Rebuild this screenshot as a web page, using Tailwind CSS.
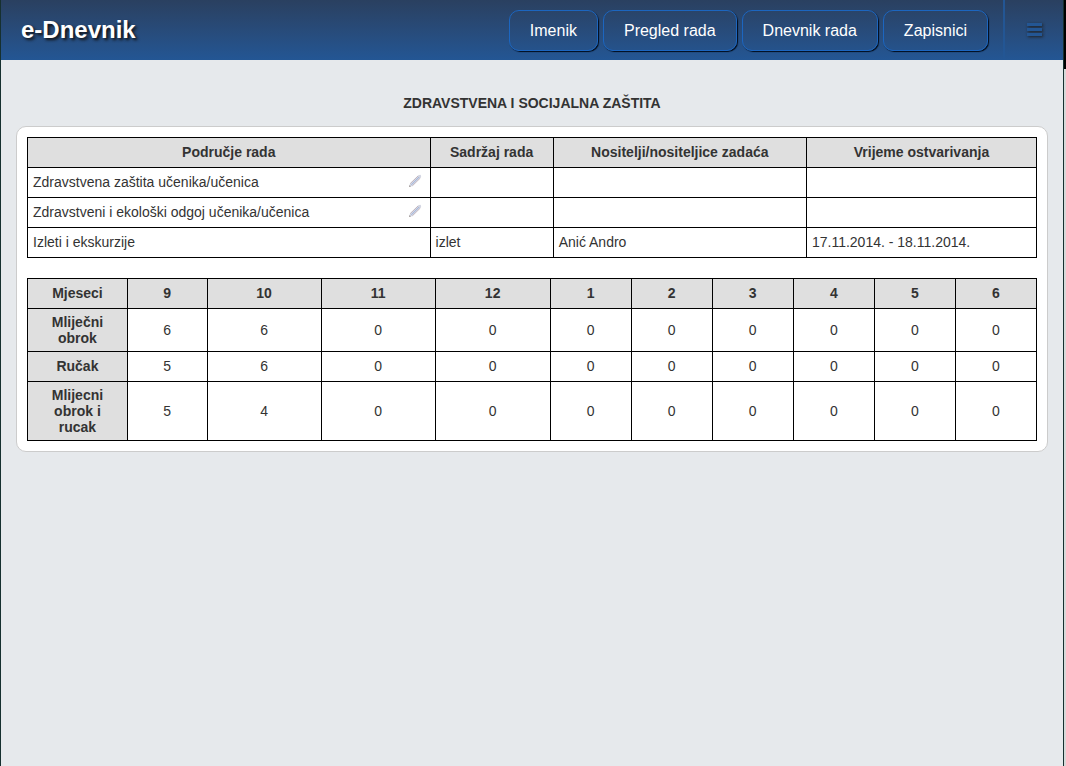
<!DOCTYPE html>
<html lang="hr">
<head>
<meta charset="utf-8">
<meta name="viewport" content="width=device-width, initial-scale=1">
<title>e-Dnevnik</title>
<script src="https://cdn.jsdelivr.net/npm/@tailwindcss/browser@4"></script>
</head>
<body class="flex min-h-screen bg-[#e6e9ec] font-['Liberation_Sans',Arial,sans-serif] text-[#333]">
<div class="min-w-0 flex-1 border-x border-[#16302f]">
  <header class="flex h-[60px] items-center bg-linear-to-b from-[#2a4060] to-[#235694]">
    <a href="#" class="pl-5 text-2xl font-bold text-white [text-shadow:2px_2px_3px_#111]">e-Dnevnik</a>
    <nav class="ml-auto flex gap-[5px] pr-[15px] text-base text-white">
      <a href="#" class="flex h-[41px] items-center rounded-[10px] border border-[#1c66c0] px-5 pt-0.5 shadow-[1px_1px_1px_#000c1c]">Imenik</a>
      <a href="#" class="flex h-[41px] items-center rounded-[10px] border border-[#1c66c0] px-5 pt-0.5 shadow-[1px_1px_1px_#000c1c]">Pregled rada</a>
      <a href="#" class="flex h-[41px] items-center rounded-[10px] border border-[#1c66c0] px-5 pt-0.5 shadow-[1px_1px_1px_#000c1c]">Dnevnik rada</a>
      <a href="#" class="flex h-[41px] items-center rounded-[10px] border border-[#1c66c0] px-5 pt-0.5 shadow-[1px_1px_1px_#000c1c]">Zapisnici</a>
    </nav>
    <button type="button" aria-label="Izbornik" class="flex h-full w-[60px] items-center border-l-2 border-[#235694] pb-0.5 pl-[22px]">
      <span class="flex flex-col gap-0.5">
        <span class="h-[3px] w-[15px] bg-[#235694] shadow-[1px_1px_3px_#222]"></span>
        <span class="h-[3px] w-[15px] bg-[#235694] shadow-[1px_1px_3px_#222]"></span>
        <span class="h-[3px] w-[15px] bg-[#235694] shadow-[1px_1px_3px_#222]"></span>
      </span>
    </button>
  </header>
  <main class="px-[15px] pt-[35px]">
    <h1 class="text-center text-sm leading-4 font-bold">ZDRAVSTVENA I SOCIJALNA ZAŠTITA</h1>
    <section class="mt-[15px] rounded-[10px] border border-[#ccc] bg-white p-2.5 text-sm leading-4">
      <table class="w-full table-fixed border-collapse [&_td]:border [&_td]:border-black [&_td]:px-[5px] [&_td]:pb-0.5 [&_th]:border [&_th]:border-black [&_th]:bg-[#dfdfdf] [&_th]:px-[5px] [&_th]:pb-0.5 [&_tr]:h-[30px]">
        <colgroup><col class="w-[39.9%]"><col class="w-[12.2%]"><col class="w-[25.1%]"><col></colgroup>
        <thead><tr><th scope="col">Područje rada</th><th scope="col">Sadržaj rada</th><th scope="col">Nositelji/nositeljice zadaća</th><th scope="col">Vrijeme ostvarivanja</th></tr></thead>
        <tbody>
          <tr>
            <td><div class="flex items-start justify-between pr-[3px]">Zdravstvena zaštita učenika/učenica
              <button type="button" aria-label="Uredi"><svg class="block size-3.5" viewBox="0 0 14 14" fill="none"><path d="M1 13 2 9.6 10.3 1.6Q12.4 0 13 1.4 13.6 2.6 12.4 3.8L4.3 12Z" fill="#d3d7e3"/><path d="M2.2 9.6 10.2 1.8M4.4 11.8 12.4 4" stroke="#b9a9b4" stroke-width=".8"/><path d="M3.4 10.8 11.2 3" stroke="#9fb3dc" stroke-width="1"/><path d="m1 13 .6-2 1.4 1.5Z" fill="#9c938f"/></svg></button></div></td>
            <td></td><td></td><td></td>
          </tr>
          <tr>
            <td><div class="flex items-start justify-between pr-[3px]">Zdravstveni i ekološki odgoj učenika/učenica
              <button type="button" aria-label="Uredi"><svg class="block size-3.5" viewBox="0 0 14 14" fill="none"><path d="M1 13 2 9.6 10.3 1.6Q12.4 0 13 1.4 13.6 2.6 12.4 3.8L4.3 12Z" fill="#d3d7e3"/><path d="M2.2 9.6 10.2 1.8M4.4 11.8 12.4 4" stroke="#b9a9b4" stroke-width=".8"/><path d="M3.4 10.8 11.2 3" stroke="#9fb3dc" stroke-width="1"/><path d="m1 13 .6-2 1.4 1.5Z" fill="#9c938f"/></svg></button></div></td>
            <td></td><td></td><td></td>
          </tr>
          <tr><td>Izleti i ekskurzije</td><td>izlet</td><td>Anić Andro</td><td>17.11.2014. - 18.11.2014.</td></tr>
        </tbody>
      </table>
      <table class="mt-5 w-full table-fixed border-collapse text-center [&_td]:border [&_td]:border-black [&_th]:border [&_th]:border-black [&_th]:bg-[#dfdfdf] [&_th]:px-5 [&_th]:pt-[5px] [&_th]:pb-1.5 [&_tr]:h-[30px]">
        <colgroup><col class="w-[9.9%]"><col class="w-[7.9%]"><col class="w-[11.3%]"><col class="w-[11.3%]"><col class="w-[11.4%]"><col><col><col><col><col><col></colgroup>
        <thead><tr><th scope="col">Mjeseci</th><th scope="col">9</th><th scope="col">10</th><th scope="col">11</th><th scope="col">12</th><th scope="col">1</th><th scope="col">2</th><th scope="col">3</th><th scope="col">4</th><th scope="col">5</th><th scope="col">6</th></tr></thead>
        <tbody>
          <tr><th scope="row" class="pb-[5px]!">Mliječni obrok</th><td>6</td><td>6</td><td>0</td><td>0</td><td>0</td><td>0</td><td>0</td><td>0</td><td>0</td><td>0</td></tr>
          <tr class="[&>td]:pb-0.5"><th scope="row">Ručak</th><td>5</td><td>6</td><td>0</td><td>0</td><td>0</td><td>0</td><td>0</td><td>0</td><td>0</td><td>0</td></tr>
          <tr><th scope="row" class="pb-[5px]!">Mlijecni obrok i rucak</th><td>5</td><td>4</td><td>0</td><td>0</td><td>0</td><td>0</td><td>0</td><td>0</td><td>0</td><td>0</td></tr>
        </tbody>
      </table>
    </section>
  </main>
</div>
<div class="w-0.5 bg-[#d8d8d8]" aria-hidden="true"><div class="h-[69px] bg-black"></div></div>
</body>
</html>
